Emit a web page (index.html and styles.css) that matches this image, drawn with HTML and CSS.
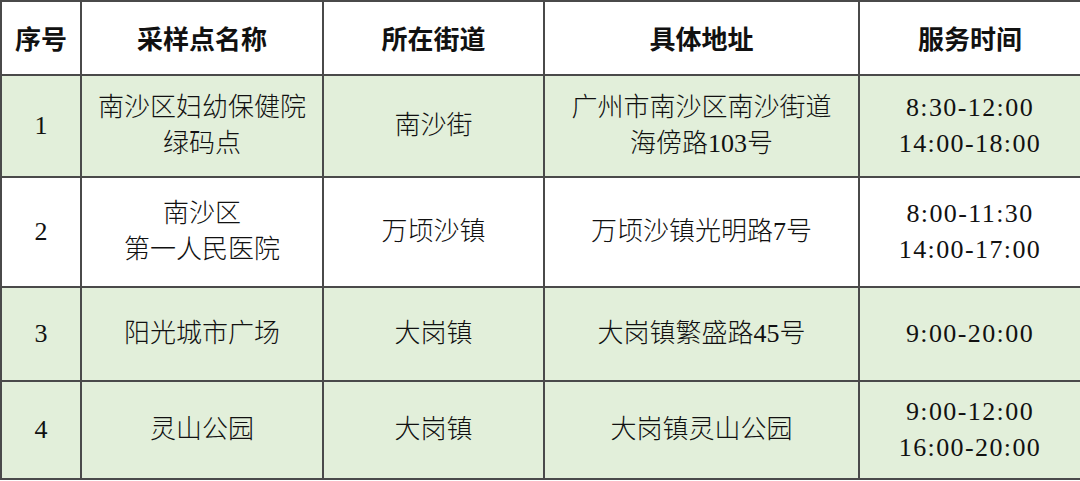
FILE: index.html
```html
<!DOCTYPE html>
<html lang="zh-CN">
<head>
<meta charset="utf-8">
<link rel="stylesheet" href="styles.css">
</head>
<body>
<table class="sites">
  <colgroup>
    <col class="c1"><col class="c2"><col class="c3"><col class="c4"><col class="c5">
  </colgroup>
  <thead>
    <tr class="r0">
      <th>序号</th><th>采样点名称</th><th>所在街道</th><th>具体地址</th><th>服务时间</th>
    </tr>
  </thead>
  <tbody>
    <tr class="r1 green">
      <td class="num">1</td>
      <td>南沙区妇幼保健院<br>绿码点</td>
      <td>南沙街</td>
      <td>广州市南沙区南沙街道<br>海傍路103号</td>
      <td class="time">8:30-12:00<br>14:00-18:00</td>
    </tr>
    <tr class="r2">
      <td class="num">2</td>
      <td>南沙区<br>第一人民医院</td>
      <td>万顷沙镇</td>
      <td>万顷沙镇光明路7号</td>
      <td class="time">8:00-11:30<br>14:00-17:00</td>
    </tr>
    <tr class="r3 green">
      <td class="num">3</td>
      <td>阳光城市广场</td>
      <td>大岗镇</td>
      <td>大岗镇繁盛路45号</td>
      <td class="time">9:00-20:00</td>
    </tr>
    <tr class="r4 green">
      <td class="num">4</td>
      <td>灵山公园</td>
      <td>大岗镇</td>
      <td>大岗镇灵山公园</td>
      <td class="time">9:00-12:00<br>16:00-20:00</td>
    </tr>
  </tbody>
</table>
</body>
</html>
```

FILE: styles.css
```css
html, body {
  margin: 0;
  padding: 0;
  background: #ffffff;
}
.sites {
  width: 1080px;
  table-layout: fixed;
  border-collapse: collapse;
  font-family: "Liberation Serif", "Noto Sans CJK SC", serif;
  color: #111111;
}
.c1 { width: 80px; }
.c2 { width: 242px; }
.c3 { width: 221px; }
.c4 { width: 315px; }
.c5 { width: 222px; }
.sites th, .sites td {
  border: 2px solid #4a4a4a;
  text-align: center;
  vertical-align: middle;
  padding: 0;
}
.sites th {
  font-family: "Noto Sans CJK SC", sans-serif;
  font-weight: 700;
  font-size: 26px;
  line-height: 36px;
  color: #111111;
}
.sites td {
  font-size: 26px;
  line-height: 36px;
  font-weight: 300;
}
.green td { background: #e2efda; }
.r0 { height: 74px; }
.r1 { height: 102px; }
.r2 { height: 110px; }
.r3 { height: 94px; }
.r4 { height: 98px; }
.time { letter-spacing: 1.4px; padding-top: 4px; }
.num { font-size: 26px; }
```
